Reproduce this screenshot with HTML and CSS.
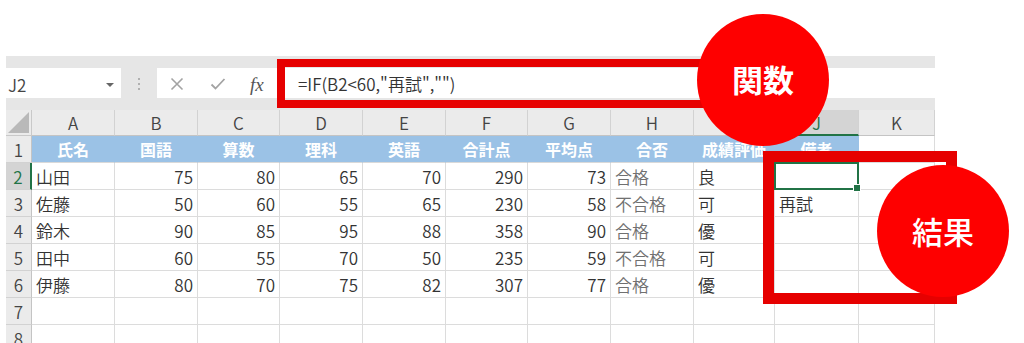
FILE: index.html
```html
<!DOCTYPE html>
<html lang="ja">
<head>
<meta charset="utf-8">
<link rel="stylesheet" href="styles.css">
</head>
<body>
<div class="page">
  <div class="fbar">
    <div class="namebox"><span>J2</span><span class="caret"></span></div>
    <div class="split"><i></i><i></i><i></i></div>
    <div class="fbtns">
      <svg class="ic" width="14" height="14" viewBox="0 0 14 14"><path d="M1.5 1.5L12.5 12.5M12.5 1.5L1.5 12.5" stroke="#a3a3a3" stroke-width="1.6" fill="none"/></svg>
      <svg class="ic" width="16" height="14" viewBox="0 0 16 14"><path d="M1.5 7.5L5.5 11.5L14.5 2" stroke="#a3a3a3" stroke-width="1.8" fill="none"/></svg>
      <span class="fx">fx</span>
    </div>
    <div class="finput">=IF(B2&lt;60,"再試","")</div>
  </div>

  <div class="sheet">
    <div class="c corner"><span class="tri"></span></div>
    <div class="c ch">A</div><div class="c ch">B</div><div class="c ch">C</div><div class="c ch">D</div><div class="c ch">E</div><div class="c ch">F</div><div class="c ch">G</div><div class="c ch">H</div><div class="c ch">I</div><div class="c ch act">J</div><div class="c ch">K</div>

    <div class="c rh">1</div>
    <div class="c hd">氏名</div><div class="c hd">国語</div><div class="c hd">算数</div><div class="c hd">理科</div><div class="c hd">英語</div><div class="c hd">合計点</div><div class="c hd">平均点</div><div class="c hd">合否</div><div class="c hd">成績評価</div><div class="c hd">備考</div><div class="c"></div>

    <div class="c rh act">2</div>
    <div class="c">山田</div><div class="c n">75</div><div class="c n">80</div><div class="c n">65</div><div class="c n">70</div><div class="c n">290</div><div class="c n">73</div><div class="c g">合格</div><div class="c">良</div><div class="c sel"></div><div class="c"></div>

    <div class="c rh">3</div>
    <div class="c">佐藤</div><div class="c n">50</div><div class="c n">60</div><div class="c n">55</div><div class="c n">65</div><div class="c n">230</div><div class="c n">58</div><div class="c g">不合格</div><div class="c">可</div><div class="c">再試</div><div class="c"></div>

    <div class="c rh">4</div>
    <div class="c">鈴木</div><div class="c n">90</div><div class="c n">85</div><div class="c n">95</div><div class="c n">88</div><div class="c n">358</div><div class="c n">90</div><div class="c g">合格</div><div class="c">優</div><div class="c"></div><div class="c"></div>

    <div class="c rh">5</div>
    <div class="c">田中</div><div class="c n">60</div><div class="c n">55</div><div class="c n">70</div><div class="c n">50</div><div class="c n">235</div><div class="c n">59</div><div class="c g">不合格</div><div class="c">可</div><div class="c"></div><div class="c"></div>

    <div class="c rh">6</div>
    <div class="c">伊藤</div><div class="c n">80</div><div class="c n">70</div><div class="c n">75</div><div class="c n">82</div><div class="c n">307</div><div class="c n">77</div><div class="c g">合格</div><div class="c">優</div><div class="c"></div><div class="c"></div>

    <div class="c rh">7</div>
    <div class="c"></div><div class="c"></div><div class="c"></div><div class="c"></div><div class="c"></div><div class="c"></div><div class="c"></div><div class="c"></div><div class="c"></div><div class="c"></div><div class="c"></div>

    <div class="c rh">8</div>
    <div class="c"></div><div class="c"></div><div class="c"></div><div class="c"></div><div class="c"></div><div class="c"></div><div class="c"></div><div class="c"></div><div class="c"></div><div class="c"></div><div class="c"></div>
  </div>

  <div class="frame frame-formula"></div>
  <div class="badge badge-func">関数</div>
  <div class="frame frame-result"></div>
  <div class="badge badge-result">結果</div>
</div>
</body>
</html>
```

FILE: styles.css
```css
* { box-sizing: border-box; }

html, body {
  margin: 0;
  background: #fff;
  width: 1024px;
  height: 343px;
  overflow: hidden;
}

body {
  font-family: "Noto Sans CJK JP", "Noto Sans", sans-serif;
  font-weight: 350;
}

.page {
  position: relative;
  width: 935px;
  padding: 56px 0 0 6px;
}

/* formula bar */
.fbar {
  display: flex;
  align-items: center;
  height: 54px;
  padding: 12px 0;
  background: #e6e6e6;
}

.namebox {
  width: 115px;
  height: 30px;
  background: #fff;
  display: flex;
  align-items: center;
  justify-content: space-between;
  padding: 3px 7px 0 2px;
  font-size: 17px;
  line-height: 1;
  color: #444;
}

.caret {
  width: 0;
  height: 0;
  border-left: 4px solid transparent;
  border-right: 4px solid transparent;
  border-top: 4px solid #666;
}

.split {
  width: 36px;
  display: flex;
  flex-direction: column;
  align-items: center;
  gap: 3px;
  padding-top: 2px;
}

.split i {
  width: 2px;
  height: 2px;
  background: #b0b0b0;
}

.fbtns {
  width: 120px;
  height: 30px;
  background: #fff;
  display: flex;
  align-items: center;
  padding: 2px 0 0 13px;
  gap: 26px;
}

.fx {
  font-family: "Liberation Serif", "DejaVu Serif", serif;
  font-style: italic;
  font-size: 19px;
  line-height: 1;
  color: #555;
  margin-left: -2px;
}

.finput {
  flex: 1;
  height: 30px;
  background: #fff;
  display: flex;
  align-items: center;
  padding: 0 0 0 21px;
  font-size: 17px;
  line-height: 1;
  color: #333;
}

/* sheet grid */
.sheet {
  display: grid;
  grid-template-columns: 26px 83px 83px 82px 83px 83px 82px 83px 83px 81px 84px 76px;
  grid-template-rows: 26px;
  grid-auto-rows: 27px;
}

.c {
  display: flex;
  align-items: center;
  padding: 0 4px;
  border-right: 1px solid #dcdcdc;
  border-bottom: 1px solid #dcdcdc;
  font-size: 17px;
  line-height: 1;
  color: #333;
  white-space: nowrap;
  overflow: hidden;
  background: #fff;
}

.n { justify-content: flex-end; }
.g { color: #707070; }

.corner {
  background: #ebebeb;
  border-right-color: #c9c9c9;
  border-bottom-color: #c9c9c9;
  align-items: flex-end;
  justify-content: flex-end;
  padding: 0 2px 2px 0;
}

.tri {
  width: 0;
  height: 0;
  border-left: 21px solid transparent;
  border-bottom: 21px solid #b9b9b9;
}

.ch {
  background: #ebebeb;
  justify-content: center;
  color: #444;
  border-right-color: #d2d2d2;
  border-bottom-color: #c4c4c4;
}

.rh {
  background: #ebebeb;
  justify-content: center;
  color: #444;
  padding: 0;
  border-right-color: #c4c4c4;
  border-bottom-color: #d2d2d2;
}

.ch.act {
  background: #d4d4d4;
  color: #217346;
  border-bottom: 2px solid #217346;
}

.rh.act {
  background: #d4d4d4;
  color: #217346;
  border-right: 2px solid #217346;
}

.hd {
  background: #9bc2e6;
  color: #fff;
  font-weight: 700;
  font-size: 16px;
  justify-content: center;
  border-right-color: #9bc2e6;
  border-bottom-color: #d9d9d9;
}

.sel {
  position: relative;
  overflow: visible;
}

.sel::before {
  content: "";
  position: absolute;
  left: -1px;
  top: -1px;
  right: -1px;
  bottom: -1px;
  border: 2px solid #217346;
}

.sel::after {
  content: "";
  position: absolute;
  right: -3px;
  bottom: -3px;
  width: 6px;
  height: 6px;
  background: #217346;
  border: 1px solid #fff;
}

/* annotations */
.frame {
  position: absolute;
  border-style: solid;
  border-color: #e60000;
}

.frame-formula {
  left: 277px;
  top: 59px;
  width: 500px;
  height: 49px;
  border-width: 8px;
}

.frame-result {
  left: 763px;
  top: 151px;
  width: 194px;
  height: 153px;
  border-width: 11px;
}

.badge {
  position: absolute;
  width: 132px;
  height: 132px;
  border-radius: 50%;
  background: #fe0000;
  color: #fff;
  display: flex;
  align-items: center;
  justify-content: center;
  font-size: 31px;
  font-weight: 700;
  line-height: 1;
  padding-bottom: 4px;
}

.badge-func {
  left: 697px;
  top: 14px;
}

.badge-result {
  left: 877px;
  top: 165px;
  font-weight: 500;
  padding-bottom: 2px;
}
```
